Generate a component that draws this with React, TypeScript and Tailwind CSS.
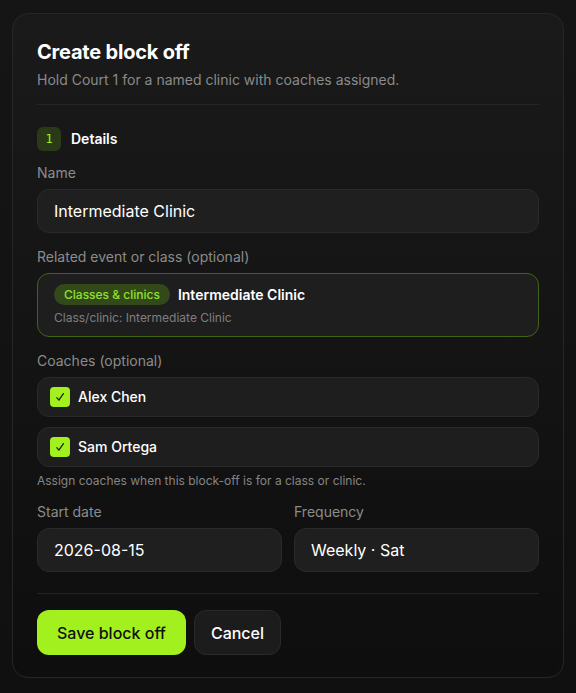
const font = { fontFamily: "Inter, 'Noto Sans', sans-serif" };

function Label({ children }: { children: React.ReactNode }) {
  return <div className="text-sm text-[#8c8c8c] leading-5 mb-1.5">{children}</div>;
}

function Field({ value }: { value: string }) {
  return (
    <div className="h-11 rounded-xl bg-[#1f1f1f] border border-[#2a2a2a] px-4 flex items-center text-base text-white">
      {value}
    </div>
  );
}

function CoachRow({ name }: { name: string }) {
  return (
    <div className="h-10 rounded-xl bg-[#1e1e1e] border border-[#2a2a2a] px-3 flex items-center gap-2">
      <span className="w-5 h-5 rounded-[4px] bg-[#a3f01f] flex items-center justify-center">
        {/* thin tick */}
        <svg width="10" height="10" viewBox="0 0 10 10" fill="none">
          <path
            d="M1.8 5.6 L3.9 8.2 L8.4 1.6"
            stroke="#1a1a1a"
            strokeWidth="1.2"
            strokeLinecap="round"
            strokeLinejoin="round"
          />
        </svg>
      </span>
      <span className="text-sm font-medium text-white">{name}</span>
    </div>
  );
}

export default function App() {
  return (
    <div
      className="min-h-[693px] bg-gradient-to-b from-[#151515] to-[#101010] px-3 pt-[13px] pb-4"
      style={font}
    >
      <div className="rounded-2xl border border-[#262626] bg-gradient-to-b from-[#1a1a1a] to-[#0e0e0e] px-6 pt-6 pb-[22px]">
        <h1 className="text-xl font-bold text-white leading-7 tracking-[-0.01em]">
          Create block off
        </h1>
        <p className="text-sm text-[#8a8a8a] mt-1 leading-5">
          Hold Court 1 for a named clinic with coaches assigned.
        </p>
        <div className="h-px bg-[#262626] mt-[14px] mb-[22px]" />

        <div className="flex items-center gap-2.5 mb-3">
          <span
            className="w-6 h-6 rounded-md bg-[#2a3a18] flex items-center justify-center text-xs text-[#a3f01f]"
            style={{ fontFamily: "'DejaVu Sans Mono', monospace" }}
          >
            1
          </span>
          <span className="text-sm font-semibold text-white">Details</span>
        </div>

        <Label>Name</Label>
        <Field value="Intermediate Clinic" />

        <div className="mt-[14px]">
          <Label>Related event or class (optional)</Label>
          <div className="rounded-xl bg-[#1e1e1e] border border-[#416316] px-4 pt-[10px] pb-[10px]">
            <div className="flex items-center gap-2">
              <span className="rounded-full bg-[#33491a] text-[#8fe22a] text-xs font-medium px-2.5 py-[2px] leading-[17px]">
                Classes &amp; clinics
              </span>
              <span className="text-sm font-semibold text-white">Intermediate Clinic</span>
            </div>
            <div className="text-xs text-[#7e7e7e] mt-[5px] leading-4">Class/clinic: Intermediate Clinic</div>
          </div>
        </div>

        <div className="mt-[14px]">
          <Label>Coaches (optional)</Label>
          <div className="flex flex-col gap-2.5">
            <CoachRow name="Alex Chen" />
            <CoachRow name="Sam Ortega" />
          </div>
          <p className="text-xs text-[#858585] mt-[6px] leading-4">
            Assign coaches when this block-off is for a class or clinic.
          </p>
        </div>

        <div className="grid grid-cols-2 gap-3 mt-[13px]">
          <div>
            <Label>Start date</Label>
            <Field value="2026-08-15" />
          </div>
          <div>
            <Label>Frequency</Label>
            <Field value="Weekly · Sat" />
          </div>
        </div>

        <div className="h-px bg-[#222222] mt-[21px] mb-4" />

        <div className="flex items-center gap-2">
          <button className="h-[45px] px-5 rounded-xl bg-[#a3f01f] text-[#111111] text-base font-medium">
            Save block off
          </button>
          <button className="h-[45px] px-4 rounded-xl bg-[#1c1c1c] border border-[#2a2a2a] text-white text-base font-medium">
            Cancel
          </button>
        </div>
      </div>
    </div>
  );
}
